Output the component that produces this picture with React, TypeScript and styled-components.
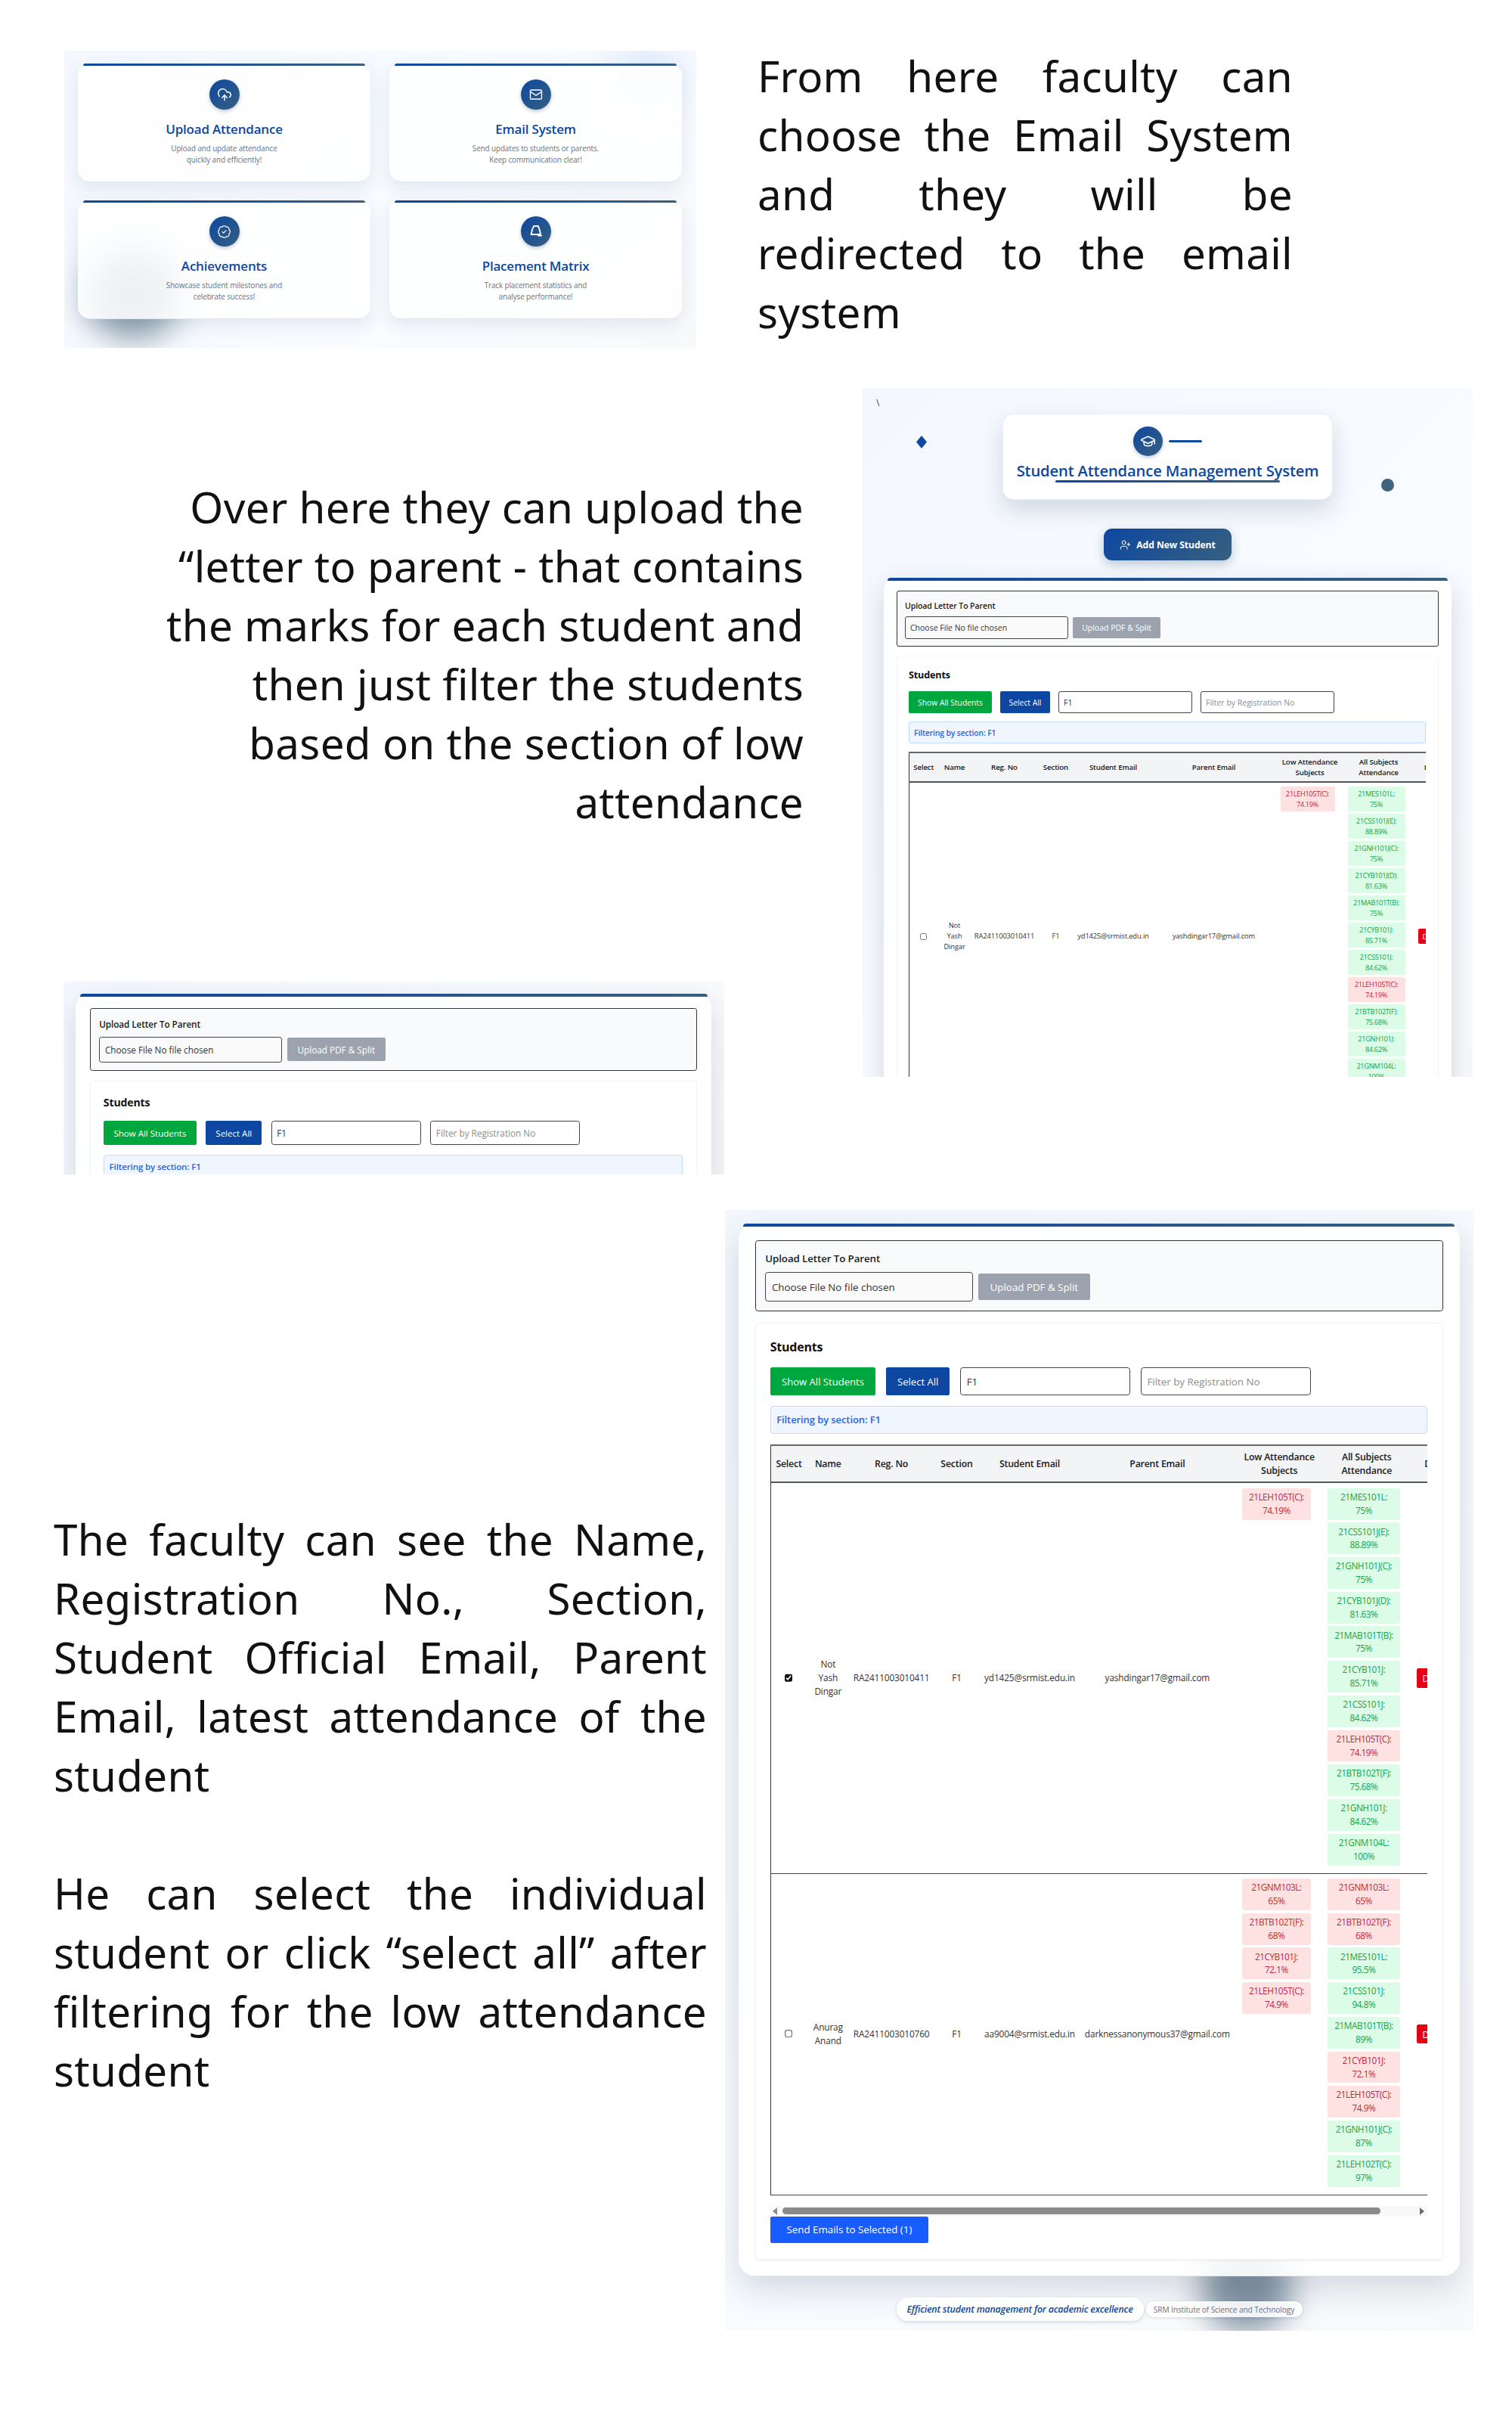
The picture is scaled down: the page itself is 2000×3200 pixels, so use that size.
import React from "react";
import styled, { createGlobalStyle } from "styled-components";
import { CloudUpload, Mail, BadgeCheck, GraduationCap, UserPlus } from "lucide-react";

const UI_FONT = `"Open Sans", "Noto Sans", sans-serif`;
const BRAND = "linear-gradient(135deg, #0d47a1 0%, #37607f 100%)";

const Global = createGlobalStyle`
  html, body { margin: 0; padding: 0; background: #fff; }
  #root { width: 2000px; height: 3200px; overflow: hidden; }
  * { box-sizing: border-box; }
`;

const Page = styled.main`
  width: 2000px;
  height: 3200px;
  padding-top: 62px;
  background: #fff;
  font-family: "Noto Sans", "Open Sans", sans-serif;
  color: #111;
`;

const Section = styled.section<{ $top?: number }>`
  display: flex;
  align-items: flex-start;
  margin-top: ${(p) => p.$top ?? 0}px;
`;

const Prose = styled.div<{ $width: number; $align: string; $left?: number; $top?: number }>`
  width: ${(p) => p.$width}px;
  margin-left: ${(p) => p.$left ?? 0}px;
  margin-top: ${(p) => p.$top ?? 0}px;
  font-size: 56.5px;
  line-height: 78px;
  letter-spacing: 0.3px;
  text-align: ${(p) => p.$align};
  color: #111;
  p { margin: 0 0 78px; }
  p:last-child { margin-bottom: 0; }
`;

const Shot = styled.div<{ $w: number; $h: number; $left?: number; $top?: number }>`
  position: relative;
  flex: none;
  width: ${(p) => p.$w}px;
  height: ${(p) => p.$h}px;
  margin-left: ${(p) => p.$left ?? 0}px;
  margin-top: ${(p) => p.$top ?? 0}px;
  overflow: hidden;
  background: linear-gradient(135deg, #f4f8fe 0%, #f8fbff 60%, #f8f9fb 100%);
  font-family: ${UI_FONT};
`;

/* Section 1: dashboard cards */
const CardGrid = styled.div`
  position: relative;
  display: grid;
  grid-template-columns: 387px 387px;
  grid-template-rows: 157px 157px;
  column-gap: 25px;
  row-gap: 24px;
  padding: 17px 0 0 18px;
`;

const ActionCard = styled.article`
  position: relative;
  display: flex;
  flex-direction: column;
  align-items: center;
  padding-top: 21px;
  border-radius: 16px;
  background: rgba(255, 255, 255, 0.86);
  border-bottom: 1px solid #dfe7f4;
  box-shadow: 0 8px 22px rgba(40, 70, 110, 0.1);
  &::before {
    content: "";
    position: absolute;
    top: 0;
    left: 7px;
    right: 7px;
    height: 3px;
    border-radius: 3px 3px 0 0;
    background: ${BRAND};
  }
`;

const IconDisc = styled.div<{ $size: number }>`
  flex: none;
  display: flex;
  align-items: center;
  justify-content: center;
  width: ${(p) => p.$size}px;
  height: ${(p) => p.$size}px;
  border-radius: 50%;
  color: #fff;
  background: ${BRAND};
  box-shadow: 0 2px 5px rgba(20, 50, 90, 0.28);
`;

const ActionTitle = styled.h3`
  margin: 14px 0 0;
  font-size: 17px;
  line-height: 24px;
  font-weight: 600;
  letter-spacing: -0.2px;
  color: #0d47a1;
`;

const ActionText = styled.p`
  margin: 6px 0 0;
  font-size: 9.9px;
  line-height: 14.5px;
  letter-spacing: -0.1px;
  color: #6b7280;
  text-align: center;
`;

const Smudge = styled.div<{ $x: number; $y: number; $size: number; $color: string; $blur: number }>`
  position: absolute;
  left: ${(p) => p.$x}px;
  top: ${(p) => p.$y}px;
  width: ${(p) => p.$size}px;
  height: ${(p) => p.$size}px;
  border-radius: 50%;
  background: ${(p) => p.$color};
  filter: blur(${(p) => p.$blur}px);
`;

/* Section 2: heading of the attendance page */
const TitleCard = styled.header`
  position: relative;
  display: flex;
  flex-direction: column;
  align-items: center;
  width: 437px;
  height: 114px;
  margin: 34px auto 0;
  padding-top: 16px;
  border-radius: 15px;
  background: #fff;
  border: 1px solid #e8f0fc;
  box-shadow: 0 14px 30px rgba(30, 50, 80, 0.16);
`;

const TitleMark = styled.div`
  display: flex;
  align-items: center;
  gap: 8px;
`;

const TitleRule = styled.span`
  width: 44px;
  height: 2.5px;
  border-radius: 2px;
  background: #0d47a1;
`;

const PageTitle = styled.h1`
  position: relative;
  margin: 5px 0 0;
  font-size: 20.2px;
  line-height: 28px;
  font-weight: 600;
  letter-spacing: -0.15px;
  color: #0d47a1;
  white-space: nowrap;
  &::after {
    content: "";
    position: absolute;
    left: 51px;
    right: 51px;
    bottom: -2px;
    height: 3px;
    border-radius: 2px;
    background: ${BRAND};
  }
`;

const AddButton = styled.button`
  display: flex;
  align-items: center;
  justify-content: center;
  gap: 7px;
  width: 169px;
  height: 42px;
  margin: 38px auto 0;
  border: none;
  border-radius: 11px;
  font-family: inherit;
  font-size: 12.2px;
  font-weight: 700;
  letter-spacing: -0.1px;
  color: #fff;
  background: ${BRAND};
  box-shadow: 0 5px 14px rgba(20, 50, 90, 0.25);
`;

const Deco = styled.div<{ $x: number; $y: number }>`
  position: absolute;
  left: ${(p) => p.$x}px;
  top: ${(p) => p.$y}px;
  line-height: 1;
  font-size: 12px;
  color: #444;
`;

const Dot = styled.span`
  display: block;
  width: 17px;
  height: 17px;
  border-radius: 50%;
  background: #41647e;
`;

/* Shared attendance panel, drawn at the panel's own scale */
const Panel = styled.div<{ $zoom: number; $left: number; $top: number }>`
  position: relative;
  width: 751px;
  margin-left: ${(p) => p.$left / p.$zoom}px;
  margin-top: ${(p) => p.$top / p.$zoom}px;
  padding: 17px;
  zoom: ${(p) => p.$zoom};
  border-radius: 17px;
  background: rgba(255, 255, 255, 0.9);
  border-bottom: 1px solid #e2e9f5;
  box-shadow: 0 12px 34px rgba(30, 50, 80, 0.17);
  &::before {
    content: "";
    position: absolute;
    top: 0;
    left: 5px;
    right: 5px;
    height: 3.5px;
    border-radius: 4px 4px 0 0;
    background: ${BRAND};
  }
`;

const UploadBox = styled.div`
  height: 74px;
  padding: 12px 10px 0;
  border: 1px solid #333;
  border-radius: 3px;
  background: #f9fafb;
`;

const FieldLabel = styled.div`
  font-size: 10.5px;
  line-height: 14px;
  font-weight: 600;
  letter-spacing: -0.08px;
  color: #1a1a1a;
`;

const UploadRow = styled.div`
  display: flex;
  align-items: center;
  gap: 6px;
  margin-top: 7px;
`;

const FileField = styled.div`
  display: flex;
  align-items: center;
  width: 216px;
  height: 30px;
  padding: 0 6px;
  border: 1px solid #444;
  border-radius: 3px;
  background: #fafafa;
  font-size: 10.5px;
  color: #333;
`;

const GreyButton = styled.button`
  width: 116px;
  height: 28px;
  padding: 0;
  border: none;
  border-radius: 2px;
  font-family: inherit;
  font-size: 10.5px;
  color: #fff;
  background: #9ca3af;
`;

const StudentsBox = styled.div`
  margin-top: 12px;
  padding: 16px 16px 16px 15px;
  border: 1px solid #f3f4f6;
  border-radius: 4px;
  background: #fff;
  box-shadow: 0 1px 2px rgba(0, 0, 0, 0.05);
`;

const StudentsTitle = styled.h2`
  margin: 0;
  font-size: 12.6px;
  line-height: 18px;
  font-weight: 700;
  letter-spacing: -0.15px;
  color: #111;
`;

const Toolbar = styled.div`
  display: flex;
  gap: 11px;
  margin-top: 12px;
`;

const ToolButton = styled.button<{ $bg: string; $w: number }>`
  width: ${(p) => p.$w}px;
  height: 29px;
  padding: 0;
  border: none;
  border-radius: 2px;
  font-family: inherit;
  font-size: 10.3px;
  color: #fff;
  background: ${(p) => p.$bg};
`;

const FilterField = styled.div<{ $muted?: boolean }>`
  display: flex;
  align-items: center;
  width: 177px;
  height: 29px;
  padding: 0 6px;
  border: 1px solid #444;
  border-radius: 3px;
  background: #fff;
  font-size: 10.5px;
  color: ${(p) => (p.$muted ? "#8d8d8d" : "#333")};
`;

const FilterNote = styled.div`
  display: flex;
  align-items: center;
  height: 29px;
  margin-top: 11px;
  padding: 0 6px;
  border: 1px solid #bfdbfe;
  border-radius: 3px;
  background: #eff6ff;
  font-size: 10.3px;
  font-weight: 600;
  letter-spacing: -0.1px;
  color: #2563eb;
`;

const TableClip = styled.div`
  margin-top: 11px;
  overflow: hidden;
`;

const StudentTable = styled.table`
  width: 726px;
  table-layout: fixed;
  border-collapse: collapse;
  font-size: 9.35px;
  line-height: 14px;
  letter-spacing: -0.12px;
  color: #333;
`;

const HeadRow = styled.tr`
  height: 39px;
  background: #f3f4f6;
  border-top: 2px solid #666;
  border-bottom: 2px solid #555;
`;

const Th = styled.th`
  padding: 0;
  font-weight: 600;
  font-size: 9.7px;
  letter-spacing: -0.15px;
  color: #1a1a1a;
  text-align: center;
  &:first-child { border-left: 1px solid #333; }
`;

const BodyRow = styled.tr`
  border-bottom: 1.5px solid #444;
`;

const Td = styled.td`
  padding: 0;
  text-align: center;
  vertical-align: middle;
  white-space: nowrap;
  &:first-child { border-left: 1px solid #333; }
`;

const ChipCell = styled.td<{ $pad: number }>`
  padding: 5px 0 5px ${(p) => p.$pad}px;
  vertical-align: top;
`;

const Chip = styled.div<{ $low: boolean; $w: number }>`
  width: ${(p) => p.$w}px;
  height: 33px;
  margin-bottom: 3px;
  padding-top: 2.5px;
  border-radius: 2.5px;
  text-align: center;
  font-size: 9.3px;
  line-height: 14px;
  letter-spacing: -0.38px;
  white-space: nowrap;
  color: ${(p) => (p.$low ? "#c0283c" : "#16a34a")};
  background: ${(p) => (p.$low ? "#fee2e2" : "#dcfce7")};
`;

const Tick = styled.input`
  display: block;
  width: 9px;
  height: 9px;
  margin: 0 auto;
  accent-color: #111;
`;

const DeleteButton = styled.button`
  display: block;
  width: 48px;
  height: 20px;
  margin-left: 7px;
  padding: 0 0 0 6px;
  border: none;
  border-radius: 2px 0 0 2px;
  font-family: inherit;
  font-size: 9.35px;
  text-align: left;
  color: #fff;
  background: #e60012;
`;

const ScrollTrack = styled.div`
  display: flex;
  align-items: center;
  height: 11px;
  margin-top: 11px;
  padding: 0 3px;
  gap: 5px;
  background: #f8f8f8;
`;

const ScrollArrow = styled.span<{ $dir: "left" | "right" }>`
  flex: none;
  width: 0;
  height: 0;
  border-top: 4.5px solid transparent;
  border-bottom: 4.5px solid transparent;
  ${(p) => (p.$dir === "left" ? "border-right: 5px solid #8a8a8a;" : "border-left: 5px solid #6e6e6e;")}
`;

const ScrollThumb = styled.span`
  flex: none;
  width: 623px;
  height: 7.5px;
  border-radius: 4px;
  background: #8a8a8a;
`;

const ScrollFill = styled.span`
  flex: 1;
`;

const SendButton = styled.button`
  display: block;
  width: 165px;
  height: 28px;
  padding: 0;
  border: none;
  border-radius: 2px;
  font-family: inherit;
  font-size: 10.5px;
  color: #fff;
  background: #175cff;
`;

const Footer = styled.footer`
  position: relative;
  display: flex;
  align-items: center;
  justify-content: center;
  gap: 3px;
  margin-top: 28px;
`;

const FooterTag = styled.div`
  display: flex;
  align-items: center;
  justify-content: center;
  width: 327px;
  height: 31px;
  border-radius: 16px;
  background: rgba(255, 255, 255, 0.9);
  box-shadow: 0 2px 5px rgba(30, 50, 80, 0.16);
  font-size: 12.4px;
  font-weight: 600;
  font-style: italic;
  letter-spacing: -0.2px;
  white-space: nowrap;
  color: #0d47a1;
`;

const FooterOrg = styled.div`
  display: flex;
  align-items: center;
  justify-content: center;
  width: 207px;
  height: 21px;
  border-radius: 11px;
  background: rgba(255, 255, 255, 0.88);
  box-shadow: 0 1px 4px rgba(30, 50, 80, 0.14);
  font-size: 10.2px;
  letter-spacing: -0.12px;
  white-space: nowrap;
  color: #6b7280;
`;

type Mark = [string, string, boolean?];

const ROW_ONE_LOW: Mark[] = [["21LEH105T(C):", "74.19%", true]];
const ROW_ONE_ALL: Mark[] = [
  ["21MES101L:", "75%"],
  ["21CSS101J(E):", "88.89%"],
  ["21GNH101J(C):", "75%"],
  ["21CYB101J(D):", "81.63%"],
  ["21MAB101T(B):", "75%"],
  ["21CYB101J:", "85.71%"],
  ["21CSS101J:", "84.62%"],
  ["21LEH105T(C):", "74.19%", true],
  ["21BTB102T(F):", "75.68%"],
  ["21GNH101J:", "84.62%"],
  ["21GNM104L:", "100%"],
];
const ROW_TWO_LOW: Mark[] = [
  ["21GNM103L:", "65%", true],
  ["21BTB102T(F):", "68%", true],
  ["21CYB101J:", "72.1%", true],
  ["21LEH105T(C):", "74.9%", true],
];
const ROW_TWO_ALL: Mark[] = [
  ["21GNM103L:", "65%", true],
  ["21BTB102T(F):", "68%", true],
  ["21MES101L:", "95.5%"],
  ["21CSS101J:", "94.8%"],
  ["21MAB101T(B):", "89%"],
  ["21CYB101J:", "72.1%", true],
  ["21LEH105T(C):", "74.9%", true],
  ["21GNH101J(C):", "87%"],
  ["21LEH102T(C):", "97%"],
];

const COLUMNS = [38, 44, 88, 48, 104, 162, 92, 90, 60];

const Chips: React.FC<{ marks: Mark[]; w: number }> = ({ marks, w }) => (
  <>
    {marks.map(([code, pct, low], i) => (
      <Chip key={i} $low={!!low} $w={w}>
        {code}
        <br />
        {pct}
      </Chip>
    ))}
  </>
);

const Row: React.FC<{
  checked?: boolean;
  name: string[];
  reg: string;
  mail: string;
  parent: string;
  low: Mark[];
  all: Mark[];
}> = ({ checked, name, reg, mail, parent, low, all }) => (
  <BodyRow>
    <Td>
      <Tick type="checkbox" checked={!!checked} readOnly />
    </Td>
    <Td>
      {name.map((n, i) => (
        <div key={i}>{n}</div>
      ))}
    </Td>
    <Td>{reg}</Td>
    <Td>F1</Td>
    <Td>{mail}</Td>
    <Td>{parent}</Td>
    <ChipCell $pad={7}>
      <Chips marks={low} w={72} />
    </ChipCell>
    <ChipCell $pad={4}>
      <Chips marks={all} w={76} />
    </ChipCell>
    <Td>
      <DeleteButton>Delete</DeleteButton>
    </Td>
  </BodyRow>
);

const AttendancePanel: React.FC<{ zoom: number; left: number; top: number; checked?: boolean; count?: number; secondRow?: boolean }> = ({
  zoom,
  left,
  top,
  checked,
  count = 0,
  secondRow,
}) => (
  <Panel $zoom={zoom} $left={left} $top={top}>
    <UploadBox>
      <FieldLabel>Upload Letter To Parent</FieldLabel>
      <UploadRow>
        <FileField>Choose File No file chosen</FileField>
        <GreyButton>Upload PDF &amp; Split</GreyButton>
      </UploadRow>
    </UploadBox>
    <StudentsBox>
      <StudentsTitle>Students</StudentsTitle>
      <Toolbar>
        <ToolButton $bg="#00a63e" $w={110}>Show All Students</ToolButton>
        <ToolButton $bg="#0d47a1" $w={66}>Select All</ToolButton>
        <FilterField>F1</FilterField>
        <FilterField $muted>Filter by Registration No</FilterField>
      </Toolbar>
      <FilterNote>Filtering by section: F1</FilterNote>
      <TableClip>
        <StudentTable>
          <colgroup>
            {COLUMNS.map((w, i) => (
              <col key={i} style={{ width: w }} />
            ))}
          </colgroup>
          <thead>
            <HeadRow>
              <Th>Select</Th>
              <Th>Name</Th>
              <Th>Reg. No</Th>
              <Th>Section</Th>
              <Th>Student Email</Th>
              <Th>Parent Email</Th>
              <Th>Low Attendance<br />Subjects</Th>
              <Th>All Subjects<br />Attendance</Th>
              <Th>Delete</Th>
            </HeadRow>
          </thead>
          <tbody>
            <Row
              checked={checked}
              name={["Not", "Yash", "Dingar"]}
              reg="RA2411003010411"
              mail="yd1425@srmist.edu.in"
              parent="yashdingar17@gmail.com"
              low={ROW_ONE_LOW}
              all={ROW_ONE_ALL}
            />
            {secondRow && (
              <Row
                name={["Anurag", "Anand"]}
                reg="RA2411003010760"
                mail="aa9004@srmist.edu.in"
                parent="darknessanonymous37@gmail.com"
                low={ROW_TWO_LOW}
                all={ROW_TWO_ALL}
              />
            )}
          </tbody>
        </StudentTable>
      </TableClip>
      <ScrollTrack>
        <ScrollArrow $dir="left" />
        <ScrollThumb />
        <ScrollFill />
        <ScrollArrow $dir="right" />
      </ScrollTrack>
      <SendButton>Send Emails to Selected ({count})</SendButton>
    </StudentsBox>
  </Panel>
);

const LaptopGlyph = () => (
  <svg width="20" height="20" viewBox="0 0 20 20" fill="none" stroke="#fff" strokeWidth="1.9" strokeLinecap="round" strokeLinejoin="round">
    <path d="M5.5 6.5 L7 3 H13 L15 9 L16 14 H3.5 L5.2 7" />
    <path d="M13 15.5 H17" />
  </svg>
);

const ACTIONS = [
  { title: "Upload Attendance", icon: <CloudUpload size={20} strokeWidth={1.8} />, text: ["Upload and update attendance", "quickly and efficiently!"] },
  { title: "Email System", icon: <Mail size={18} strokeWidth={1.9} />, text: ["Send updates to students or parents.", "Keep communication clear!"] },
  { title: "Achievements", icon: <BadgeCheck size={19} strokeWidth={1.6} />, text: ["Showcase student milestones and", "celebrate success!"] },
  { title: "Placement Matrix", icon: <LaptopGlyph />, text: ["Track placement statistics and", "analyse performance!"] },
];

export default function App() {
  return (
    <Page>
      <Global />
      <Section>
        <Shot $w={836} $h={393} $left={85} $top={5}>
          <Smudge $x={720} $y={-20} $size={100} $color="rgba(200,222,250,0.45)" $blur={24} />
          <Smudge $x={32} $y={262} $size={120} $color="rgba(70,95,120,0.62)" $blur={22} />
          <CardGrid>
            {ACTIONS.map((a) => (
              <ActionCard key={a.title}>
                <IconDisc $size={40}>{a.icon}</IconDisc>
                <ActionTitle>{a.title}</ActionTitle>
                <ActionText>
                  {a.text[0]}
                  <br />
                  {a.text[1]}
                </ActionText>
              </ActionCard>
            ))}
          </CardGrid>
        </Shot>
        <Prose $width={708} $align="justify" $left={81}>
          <p>From here faculty can choose the Email System and they will be redirected to the email system</p>
        </Prose>
      </Section>

      <Section $top={53}>
        <div>
          <Prose $width={1063} $align="right" $top={119}>
            <p>
              Over here they can upload the
              <br />
              “letter to parent - that contains
              <br />
              the marks for each student and
              <br />
              then just filter the students
              <br />
              based on the section of low
              <br />
              attendance
            </p>
          </Prose>
          <Shot $w={874} $h={255} $left={84} $top={198}>
            <AttendancePanel zoom={1.12} left={16} top={16} />
          </Shot>
        </div>
        <Shot $w={807} $h={911} $left={78}>
          <Deco $x={18} $y={14}>\</Deco>
          <Deco $x={70} $y={63}>
            <svg width="16" height="17" viewBox="0 0 16 17"><path d="M8 0 L15 8.5 L8 17 L1 8.5 Z" fill="#0d47a1" /></svg>
          </Deco>
          <Deco $x={686} $y={120}><Dot /></Deco>
          <TitleCard>
            <TitleMark>
              <IconDisc $size={39}><GraduationCap size={21} strokeWidth={1.8} /></IconDisc>
              <TitleRule />
            </TitleMark>
            <PageTitle>Student Attendance Management System</PageTitle>
          </TitleCard>
          <AddButton>
            <UserPlus size={15} strokeWidth={1.6} />
            Add New Student
          </AddButton>
          <AttendancePanel zoom={1} left={28} top={23} />
        </Shot>
      </Section>

      <Section $top={47}>
        <Prose $width={864} $align="justify" $left={71} $top={397}>
          <p>The faculty can see the Name, Registration No., Section, Student Official Email, Parent Email, latest attendance of the student</p>
          <p>He can select the individual student or click “select all” after filtering for the low attendance student</p>
        </Prose>
        <Shot $w={990} $h={1482} $left={24}>
          <Smudge $x={630} $y={1365} $size={120} $color="rgba(60,85,110,0.62)" $blur={20} />
          <AttendancePanel zoom={1.27} left={18} top={18} checked count={1} secondRow />
          <Footer>
            <FooterTag>Efficient student management for academic excellence</FooterTag>
            <FooterOrg>SRM Institute of Science and Technology</FooterOrg>
          </Footer>
        </Shot>
      </Section>
    </Page>
  );
}
